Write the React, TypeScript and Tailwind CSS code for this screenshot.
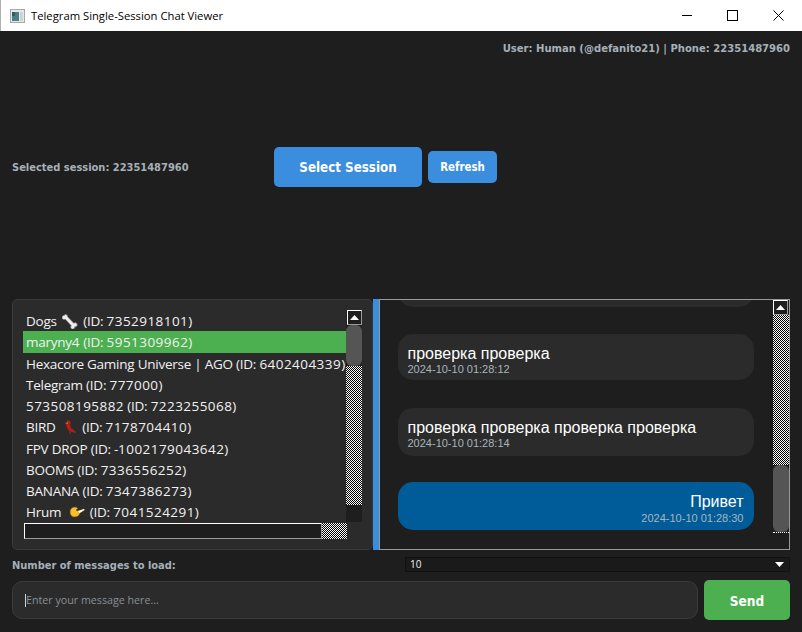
import React from "react";

const checker = "bg-[repeating-conic-gradient(#ffffff_0_25%,#000000_0_50%)] bg-[length:2px_2px]";

function Bone() {
  return (
    <svg width="16" height="16" viewBox="0 0 16 16" className="inline-block align-[-3px] ml-[2px] mr-[2px]">
      <path d="M3.500 1.500a2 2 0 0 1 2 2.200l6.300 6.600a2 2 0 1 1 .9 3.400 2 2 0 1 1-3.400-1L3.200 6.100a2 2 0 1 1-.9-3.600 1.600 1.600 0 0 1 1.200-1z" fill="#eeeeee" stroke="#8a8a8a" strokeWidth="0.7" />
    </svg>
  );
}

function Bird() {
  return (
    <svg width="16" height="16" viewBox="0 0 16 16" className="inline-block align-[-3px] ml-[2px] mr-[2px]">
      <path d="M6 1l3 1 1 2-1 1 1 4 4 3 1 2-4-1-3-1-2-3-1-4-1-1 2-1z" fill="#b51c1c" />
      <path d="M9 11l-1 4h2l0-3z" fill="#5c3a2a" />
      <path d="M4.500 4l2-.5.5 1.500z" fill="#e0a030" />
    </svg>
  );
}

function Hand() {
  return (
    <svg width="16" height="16" viewBox="0 0 16 16" className="inline-block align-[-3px] ml-[4px] mr-[2px]">
      <path d="M1 8c0-3 2-5 5-5 2 0 2 1 3 1.500L7 6l2 1 6-2 .5 1-4.500 3c-1 3-3 4-5.500 4C3 13 1 11 1 8z" fill="#f5c02c" stroke="#6b4a10" strokeWidth="0.6" />
      <path d="M9 7l6-2 .5 1-5 3z" fill="#ffffff" />
    </svg>
  );
}

const UpArrow = () => (
  <svg width="9" height="5" viewBox="0 0 9 5" className="block"><path d="M4.500 0L9 5H0z" fill="#fff" /></svg>
);

function ScrollUpBtn() {
  return (
    <div className="h-[15px] w-[15px] shrink-0 border border-t-white border-l-white border-r-[#9a9a9a] border-b-[#9a9a9a] bg-[#1e1e1e] flex items-center justify-center">
      <UpArrow />
    </div>
  );
}

const rows: { before: string; icon?: React.ReactNode; after: string; selected?: boolean }[] = [
  { before: "Dogs ", icon: <Bone />, after: " (ID: 7352918101)" },
  { before: "maryny4 (ID: 5951309962)", after: "", selected: true },
  { before: "Hexacore Gaming Universe | AGO (ID: 6402404339)", after: "" },
  { before: "Telegram (ID: 777000)", after: "" },
  { before: "573508195882 (ID: 7223255068)", after: "" },
  { before: "BIRD ", icon: <Bird />, after: " (ID: 7178704410)" },
  { before: "FPV DROP (ID: -1002179043642)", after: "" },
  { before: "BOOMS (ID: 7336556252)", after: "" },
  { before: "BANANA (ID: 7347386273)", after: "" },
  { before: "Hrum ", icon: <Hand />, after: " (ID: 7041524291)" },
];

// Digits in the reference's list font run wider than the letters.
function Spaced({ text }: { text: string }) {
  return (
    <>
      {text.split(/(\d+)/).map((part, i) =>
        /^\d+$/.test(part) ? <span key={i} className="tracking-[0.45px]">{part}</span> : <span key={i}>{part}</span>
      )}
    </>
  );
}

function Bubble({ text, time, own, cls, timeCls }: { text: string; time: string; own?: boolean; cls: string; timeCls?: string }) {
  return (
    <div className={`w-[356px] shrink-0 px-[10px] rounded-[15px] font-['Liberation_Sans',sans-serif] ${own ? "bg-[#005c99] text-right" : "bg-[#2b2b2b]"} ${cls}`}>
      <div className="text-[16px] leading-[18px] text-white">{text}</div>
      <div className={`text-[11px] leading-[13px] text-[#a9b4bd] ${timeCls ?? ""}`}>{time}</div>
    </div>
  );
}

const bold = "font-['DejaVu_Sans_Condensed','DejaVu_Sans',sans-serif] font-bold";

export default function App() {
  return (
    <div className="w-[802px] h-[632px] overflow-hidden bg-[#1e1e1e] flex flex-col font-['DejaVu_Sans',sans-serif]">
      {/* title bar */}
      <div className="h-[31px] shrink-0 bg-white flex items-center pl-[9px] border-l border-[#b0b0b0]">
        <svg width="15" height="14" viewBox="0 0 15 14" className="shrink-0">
          <rect x="0.500" y="0.500" width="14" height="13" fill="#e8e8e8" stroke="#a8a8a8" />
          <rect x="2" y="3" width="7" height="9" fill="#4d7f86" />
          <rect x="10" y="3" width="3" height="9" fill="#c9d6d6" />
          <rect x="2" y="3" width="3" height="4" fill="#2f5f55" />
        </svg>
        <span className="ml-[6px] font-['Open_Sans',sans-serif] text-[11.250px] text-black leading-none">Telegram Single-Session Chat Viewer</span>
        <div className="ml-auto flex items-center h-full">
          <div className="w-[45px] h-full flex items-center justify-center">
            <div className="w-[10px] h-px bg-black" />
          </div>
          <div className="w-[46px] h-full flex items-center justify-center">
            <div className="w-[11px] h-[11px] border border-black" />
          </div>
          <div className="w-[1px]" />
          <div className="w-[45px] h-full flex items-center justify-center">
            <svg width="11" height="11" viewBox="0 0 11 11"><path d="M0.500 0.500l10 10M10.500 0.500l-10 10" stroke="#000" strokeWidth="1" /></svg>
          </div>
          <div className="w-[1px]" />
        </div>
      </div>

      {/* user */}
      <div className={`h-[34px] shrink-0 flex items-center justify-end pr-[12px] pt-[2px] text-[11.150px] text-[#a6b0b8] ${bold}`}>
        User: Human (@defanito21) | Phone: 22351487960
      </div>

      {/* session row */}
      <div className="mt-[82px] h-[40px] shrink-0 flex items-center pl-[12px]">
        <span className={`w-[262px] pt-[3px] text-[11px] text-[#a6b0b8] ${bold}`}>Selected session: 22351487960</span>
        <button className={`w-[148px] h-[40px] pt-[2px] whitespace-nowrap rounded-[5px] bg-[#3b8ddd] text-white text-[13.250px] ${bold}`}>Select Session</button>
        <button className={`ml-[6px] w-[69px] h-[32px] pt-[2px] rounded-[5px] bg-[#3b8ddd] text-white text-[11.400px] ${bold}`}>Refresh</button>
      </div>

      {/* panels */}
      <div className="mt-[112px] h-[251px] shrink-0 flex pl-[12px] pr-[12px]">
        <div className="w-[361px] h-full rounded-[5px] border border-[#3a3a3a] bg-[#2b2b2b] pl-[10px] pt-[10px] flex flex-col">
          <div className="flex h-[212px]">
            <div className="w-[323px] h-full overflow-hidden font-['Open_Sans',sans-serif] text-[13.500px] tracking-[-0.25px] text-[#f2f2f2]">
              {rows.map((r, i) => (
                <div key={i} className={`h-[21.250px] leading-[22px] pl-[3px] whitespace-nowrap ${r.selected ? "bg-[#4caf50]" : ""}`}>
                  <Spaced text={r.before} />{r.icon}<Spaced text={r.after} />
                </div>
              ))}
            </div>
            <div className="w-[16px] h-full flex flex-col bg-[#1e1e1e]">
              <div className="flex justify-center"><ScrollUpBtn /></div>
              <div className="h-[41px] rounded-[6px] bg-[#555555]" />
              <div className={`h-[139px] ${checker}`} />
            </div>
          </div>
          <div className="flex h-[16px] mt-px">
            <div className="w-[298px] ml-px h-full bg-[#1e1e1e] border border-t-white border-l-white border-r-[#9a9a9a] border-b-[#9a9a9a]" />
            <div className={`w-[25px] h-full ${checker}`} />
          </div>
        </div>

        <div className="w-[5.500px] h-full bg-[#3b8ddd] shrink-0" />

        <div className="flex-1 h-full border border-[#9a9a9a] bg-[#1e1e1e] flex overflow-hidden pl-[18px]">
          <div className="w-[375px] h-full overflow-hidden flex flex-col justify-end pb-[19px]">
            <Bubble text="" time="" cls="h-[46px] mb-[27px]" />
            <Bubble text="проверка проверка" time="2024-10-10 01:28:12" cls="h-[46px] pt-[11px] mb-[28px]" />
            <Bubble text="проверка проверка проверка проверка" time="2024-10-10 01:28:14" cls="h-[48px] pt-[11px] mb-[26px]" />
            <Bubble text="Привет" time="2024-10-10 01:28:30" own cls="h-[48px] pt-[11px]" timeCls="mt-px" />
          </div>
          <div className="w-[16px] h-full flex flex-col">
            <ScrollUpBtn />
            <div className={`h-[150px] ${checker}`} />
            <div className="h-[67px] rounded-[6px] bg-[#555555]" />
            <div className="h-px border-t border-dotted border-white" />
          </div>
        </div>
      </div>

      {/* count row */}
      <div className="mt-[7px] h-[15px] shrink-0 flex items-center pl-[12px] pr-[12px]">
        <span className={`w-[393px] pt-[3px] text-[11px] text-[#a6b0b8] ${bold}`}>Number of messages to load:</span>
        <div className="flex-1 h-[15px] border border-[#111111] bg-[#1a1a1a] flex items-center justify-between pl-[4px] pr-[5px] font-['Open_Sans',sans-serif] text-[10px] text-[#f2f2f2]">
          <span>10</span>
          <svg width="9" height="5" viewBox="0 0 9 5"><path d="M0 0h9L4.500 5z" fill="#fff" /></svg>
        </div>
      </div>

      {/* input row */}
      <div className="mt-[8px] h-[40px] shrink-0 flex items-center pl-[12px] pr-[12px] gap-[6px]">
        <div className="flex-1 h-[38px] rounded-[10px] border border-[#3a3a3a] bg-[#2b2b2b] flex items-center pl-[12px]">
          <div className="w-px h-[13px] bg-[#c8d2da]" />
          <span className="font-['Open_Sans',sans-serif] text-[10.700px] text-[#8a8f94]">Enter your message here...</span>
        </div>
        <button className={`w-[86px] h-[40px] pt-[2px] rounded-[5px] bg-[#4caf50] text-white text-[13.500px] ${bold}`}>Send</button>
      </div>
    </div>
  );
}
